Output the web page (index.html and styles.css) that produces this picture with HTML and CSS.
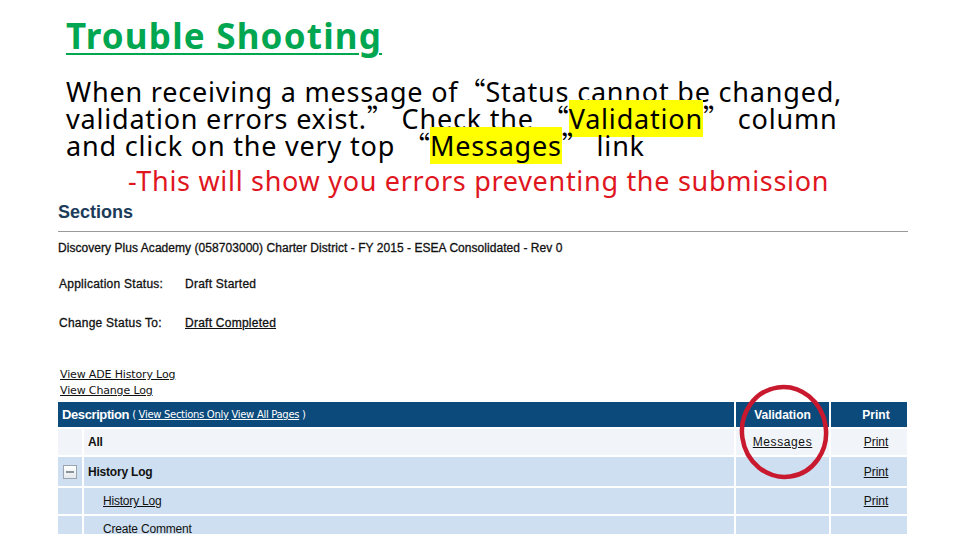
FILE: index.html
```html
<!DOCTYPE html>
<html>
<head>
<meta charset="utf-8">
<link rel="stylesheet" href="styles.css">
</head>
<body>
<div class="slide">
  <h1 class="title">Trouble Shooting</h1>
  <p class="lead">When receiving a message of<span class="q">“</span>Status cannot be changed,<br>validation errors exist.<span class="q">”</span> Check the <span class="q">“</span><mark>Validation</mark><span class="q">”</span> column<br>and click on the very top <span class="q">“</span><mark>Messages</mark><span class="q">”</span> link</p>
  <p class="note">-This will show you errors preventing the submission</p>

  <div class="shot">
    <div class="sections">Sections</div>
    <div class="rule"></div>
    <div class="appname">Discovery Plus Academy (058703000) Charter District - FY 2015 - ESEA Consolidated - Rev 0</div>
    <div class="status-row"><span class="lbl">Application Status:</span><span class="val">Draft Started</span></div>
    <div class="status-row"><span class="lbl">Change Status To:</span><a class="val link">Draft Completed</a></div>
    <div class="logs">
      <a class="loglink">View ADE History Log</a>
      <a class="loglink">View Change Log</a>
    </div>
    <div class="grid-wrap">
      <div class="grid">
        <div class="hd hd-desc"><span class="hd-title">Description</span> <span class="hd-sub">( <a>View Sections Only</a> <a>View All Pages</a> )</span></div>
        <div class="hd hd-c">Validation</div>
        <div class="hd hd-c pr">Print</div>

        <div class="c light ico"></div>
        <div class="c light name">All</div>
        <div class="c light mid"><a class="msg">Messages</a></div>
        <div class="c light mid pr"><a>Print</a></div>

        <div class="c blue ico"><span class="minus"></span></div>
        <div class="c blue name">History Log</div>
        <div class="c blue mid"></div>
        <div class="c blue mid pr"><a>Print</a></div>

        <div class="c blue ico"></div>
        <div class="c blue name sub"><a>History Log</a></div>
        <div class="c blue mid"></div>
        <div class="c blue mid pr"><a>Print</a></div>

        <div class="c blue ico"></div>
        <div class="c blue name sub">Create Comment</div>
        <div class="c blue mid"></div>
        <div class="c blue mid"></div>
      </div>
      <svg class="circle" width="100" height="104" viewBox="0 0 100 104">
        <ellipse cx="50" cy="52" rx="42" ry="45" fill="none" stroke="#c8192e" stroke-width="4.5" transform="rotate(-8 50 52)"/>
      </svg>
    </div>
  </div>
</div>
</body>
</html>
```

FILE: styles.css
```css
html, body {
  margin: 0;
  padding: 0;
  background: #ffffff;
}
.slide {
  width: 960px;
  height: 540px;
  overflow: hidden;
  position: relative;
  font-family: "Noto Sans", "DejaVu Sans", sans-serif;
}
.title {
  margin: 0;
  padding: 14px 0 0 66px;
  font-size: 35px;
  line-height: 44px;
  font-weight: 700;
  color: #00a650;
  text-decoration: underline;
  text-decoration-thickness: 2px;
  text-underline-offset: 4px;
  letter-spacing: 1.2px;
}
.lead {
  margin: 20px 0 0 66px;
  font-size: 27px;
  line-height: 27px;
  letter-spacing: 0.8px;
  color: #000;
}
.q {
  font-family: "Noto Sans CJK SC", sans-serif;
  line-height: 0;
  letter-spacing: 0;
}
mark {
  background: #ffff00;
  color: #000;
}
.note {
  margin: 7px 0 0 128px;
  font-size: 27px;
  line-height: 30px;
  letter-spacing: 0.7px;
  color: #e0161e;
}
.shot {
  margin: 4px 0 0 58px;
  width: 850px;
  font-family: "Liberation Sans", Arial, sans-serif;
  color: #111;
}
.sections {
  font-size: 18px;
  font-weight: 700;
  color: #1d3c5a;
  line-height: 24px;
}
.rule {
  height: 1px;
  background: #9a9a9a;
  margin-top: 7px;
}
.appname {
  font-size: 12px;
  line-height: 14px;
  margin-top: 9px;
  letter-spacing: 0.05px;
  -webkit-text-stroke: 0.3px #111;
}
.status-row {
  display: flex;
  font-size: 12px;
  line-height: 14px;
  margin-top: 22px;
  padding-left: 1px;
  letter-spacing: 0.25px;
  -webkit-text-stroke: 0.3px #111;
}
.status-row + .status-row {
  margin-top: 25px;
}
.lbl {
  width: 126px;
}
.link, .grid a, .loglink {
  text-decoration: underline;
  color: #111;
}
.logs {
  display: flex;
  flex-direction: column;
  margin-top: 37px;
  padding-left: 2px;
  font-family: "DejaVu Sans", sans-serif;
  font-size: 11px;
  line-height: 16px;
  letter-spacing: -0.15px;
}
.grid-wrap {
  position: relative;
  margin-top: 3px;
}
.grid {
  display: grid;
  grid-template-columns: 24px 650px 93px 76px;
  grid-template-rows: 25px 26px 29px 26px 26px;
  column-gap: 2px;
  row-gap: 2px;
  height: 132px;
  overflow: hidden;
}
.hd {
  background: #0c4a7c;
  color: #fff;
  font-size: 12px;
  font-weight: 700;
  display: flex;
  align-items: center;
}
.hd-desc {
  grid-column: 1 / span 2;
  padding-left: 4px;
}
.hd-title {
  font-size: 13px;
  letter-spacing: -0.4px;
}
.hd-sub {
  font-weight: 400;
  font-size: 10px;
  margin-left: 3px;
  font-family: "DejaVu Sans", sans-serif;
  letter-spacing: -0.3px;
}
.hd-sub a {
  color: #fff;
  text-decoration: underline;
}
.hd-c {
  justify-content: center;
}
.c {
  font-size: 12px;
  display: flex;
  align-items: center;
}
.light {
  background: #f1f5fa;
}
.blue {
  background: #cddff0;
}
.name {
  padding-left: 4px;
  font-weight: 700;
  letter-spacing: -0.2px;
}
.name.sub {
  padding-left: 19px;
  font-weight: 400;
}
.mid {
  justify-content: center;
}
.pr {
  padding-left: 14px;
}
.msg {
  letter-spacing: 0.6px;
}
.ico {
  justify-content: center;
}
.minus {
  width: 14px;
  height: 14px;
  border: 1px solid #9aa4ae;
  background: linear-gradient(#ffffff, #e4e8ec);
  position: relative;
  box-sizing: border-box;
}
.minus::after {
  content: "";
  position: absolute;
  left: 2px;
  right: 2px;
  top: 5px;
  height: 2px;
  background: #8a939c;
}
.circle {
  position: absolute;
  left: 676px;
  top: -22px;
}
```
